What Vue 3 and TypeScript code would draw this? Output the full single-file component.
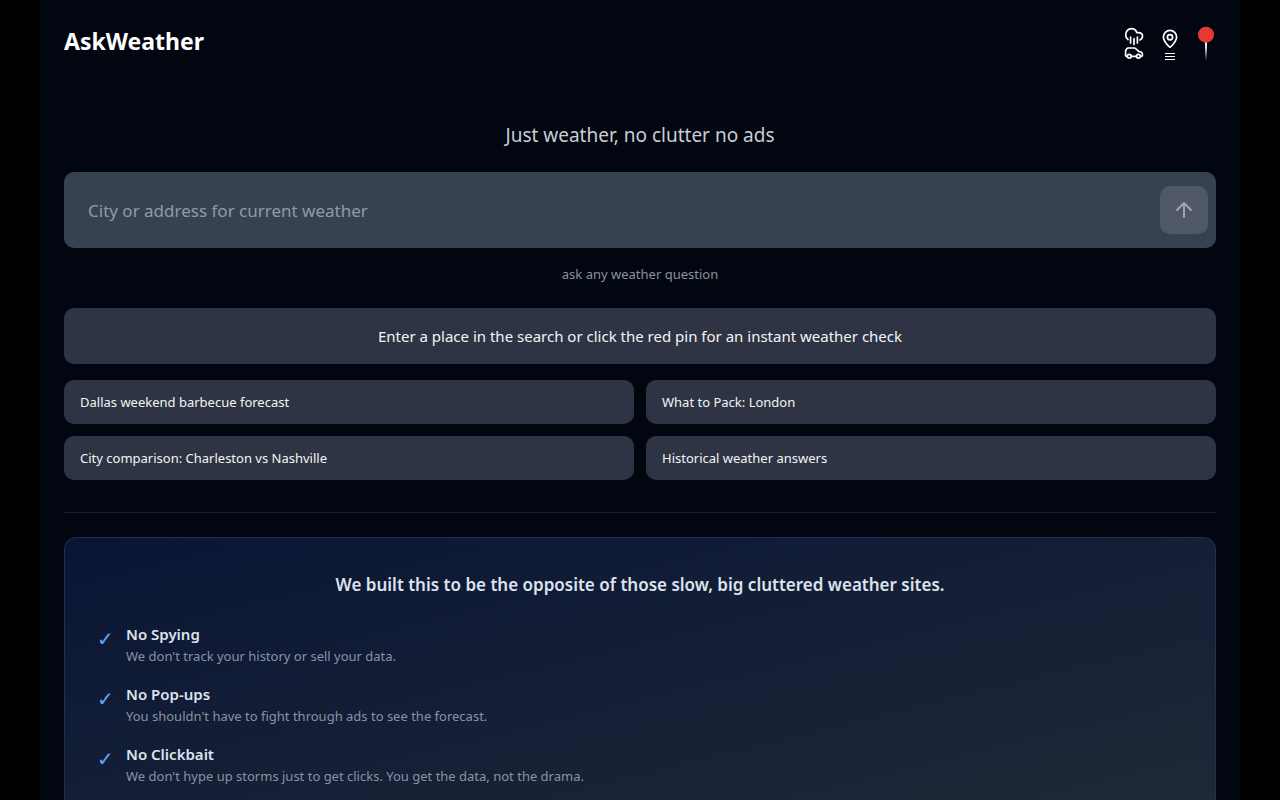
<script setup lang="ts">
import { ref } from 'vue'

const query = ref<string>('')

const suggestions: string[] = [
  'Dallas weekend barbecue forecast',
  'What to Pack: London',
  'City comparison: Charleston vs Nashville',
  'Historical weather answers',
]

interface Pledge {
  title: string
  detail: string
}

const pledges: Pledge[] = [
  { title: 'No Spying', detail: "We don't track your history or sell your data." },
  { title: 'No Pop-ups', detail: "You shouldn't have to fight through ads to see the forecast." },
  { title: 'No Clickbait', detail: "We don't hype up storms just to get clicks. You get the data, not the drama." },
]
</script>

<template>
  <div class="page">
    <header class="header">
      <h1 class="brand">AskWeather</h1>
      <nav class="actions" aria-label="Tools">
        <button type="button" class="icon-button" aria-label="Road trip weather">
          <svg width="20" height="36" viewBox="0 0 20 36" fill="none" stroke="currentColor" stroke-width="1.7" stroke-linecap="round" stroke-linejoin="round">
            <path d="M4 15.5C2.5 14.5 1.7 13 1.7 11.2C1.7 7.3 4.2 4.6 7.5 4.6C10 4.6 12 6 12.8 8.6H14.4C16.9 8.6 18.5 10.3 18.5 12.3C18.5 14.2 17.4 15.5 15.8 16" />
            <path d="M6.6 13.2V19M10 14.7V20.5M13.4 13.2V19" />
            <path d="M3.2 32.3H2.6Q1.6 32.3 1.6 31.2V27.6Q1.6 26.8 2 26L2.8 24.8Q3.2 24 4.2 24H10.2Q11 24 11.6 24.5L14.6 27.4L17 28Q18.4 28.5 18.4 29.8V31.2Q18.4 32.3 17.3 32.3H16.5M7.4 32.3H12.3" />
            <circle cx="5.3" cy="32.3" r="1.9" />
            <circle cx="14.4" cy="32.3" r="1.9" />
          </svg>
        </button>
        <button type="button" class="icon-button" aria-label="Saved places">
          <svg width="20" height="36" viewBox="0 0 20 36" fill="none" stroke="currentColor" stroke-width="1.7" stroke-linejoin="round">
            <path d="M16.6 13C16.6 17.2 12 21.6 10.5 23Q10 23.4 9.5 23C8 21.6 3.4 17.2 3.4 13A6.6 6.6 0 0 1 16.6 13Z" />
            <circle cx="10" cy="13.2" r="2.6" />
            <path d="M5 29.5H15M5 32.5H15M5 35.5H15" stroke-width="1" />
          </svg>
        </button>
        <button type="button" class="icon-button" aria-label="Weather at my location">
          <svg width="20" height="38" viewBox="0 0 20 38">
            <defs>
              <linearGradient id="needle" x1="0" y1="0" x2="0" y2="1">
                <stop offset="0" stop-color="#ffffff" />
                <stop offset="0.3" stop-color="#d5d7de" />
                <stop offset="1" stop-color="#d5d7de" stop-opacity="0" />
              </linearGradient>
            </defs>
            <rect x="9" y="18" width="2" height="19" fill="url(#needle)" />
            <circle cx="10" cy="10.7" r="8" fill="#e53935" />
          </svg>
        </button>
      </nav>
    </header>

    <main class="main">
      <p class="tagline">Just weather, no clutter no ads</p>

      <form class="search" @submit.prevent>
        <input v-model="query" class="search-input" type="text" aria-label="City or address" placeholder="City or address for current weather" />
        <button type="submit" class="send" aria-label="Search">
          <svg width="24" height="24" viewBox="0 0 24 24" fill="none" stroke="currentColor" stroke-width="2" stroke-linecap="round" stroke-linejoin="round">
            <path d="M12 19V5M5 12L12 5L19 12" />
          </svg>
        </button>
      </form>

      <p class="hint">ask any weather question</p>

      <p class="notice">Enter a place in the search or click the red pin for an instant weather check</p>

      <div class="suggestions">
        <button v-for="item in suggestions" :key="item" type="button" class="suggestion">{{ item }}</button>
      </div>

      <hr class="divider" />

      <section class="pledge">
        <h2 class="pledge-title">We built this to be the opposite of those slow, big cluttered weather sites.</h2>
        <ul class="pledge-list">
          <li v-for="item in pledges" :key="item.title" class="pledge-item">
            <span class="check" aria-hidden="true">✓</span>
            <div>
              <h3 class="item-title">{{ item.title }}</h3>
              <p class="item-detail">{{ item.detail }}</p>
            </div>
          </li>
        </ul>
      </section>
    </main>
  </div>
</template>

<style>
html {
  background: #000000;
  scrollbar-width: none;
}
body {
  margin: 0;
  background: #000000;
}
</style>

<style scoped>
.page {
  box-sizing: border-box;
  max-width: 1200px;
  min-height: 100vh;
  margin: 0 auto;
  padding: 24px;
  background: #020610;
  color: #ffffff;
  font-family: "Noto Sans", "Open Sans", sans-serif;
}
h1, h2, h3, p, ul {
  margin: 0;
  padding: 0;
}
button, input {
  font: inherit;
  border: 0;
  color: inherit;
}
button {
  cursor: pointer;
}
.header {
  display: flex;
  justify-content: space-between;
  align-items: flex-start;
  height: 36px;
}
.brand {
  font-size: 23px;
  line-height: 34px;
  font-weight: 700;
}
.actions {
  display: flex;
  gap: 16px;
  height: 36px;
}
.icon-button {
  width: 20px;
  padding: 0;
  background: none;
  display: flex;
  align-items: flex-start;
}
.icon-button svg {
  flex: none;
  overflow: visible;
}
.main {
  padding-top: 60px;
}
.tagline {
  font-size: 19px;
  line-height: 30px;
  text-align: center;
  color: #c9cdd4;
  margin-bottom: 22px;
}
.search {
  display: flex;
  align-items: center;
  height: 76px;
  padding-right: 8px;
  border-radius: 10px;
  background: #374250;
}
.search-input {
  flex: 1;
  min-width: 0;
  height: 100%;
  box-sizing: border-box;
  padding: 0 24px;
  background: none;
  outline: none;
  font-size: 17px;
}
.search-input::placeholder {
  color: #9299a6;
  opacity: 1;
}
.send {
  display: flex;
  align-items: center;
  justify-content: center;
  width: 48px;
  height: 48px;
  padding: 0;
  border-radius: 10px;
  background: #505868;
  color: #9fa5b0;
}
.hint {
  margin: 16px 0 24px;
  font-size: 13px;
  line-height: 20px;
  text-align: center;
  color: #8b919d;
}
.notice {
  padding: 16px;
  border-radius: 10px;
  background: #2e3443;
  font-size: 15px;
  line-height: 24px;
  text-align: center;
  color: #f3f4f6;
}
.suggestions {
  display: grid;
  grid-template-columns: 1fr 1fr;
  gap: 12px;
  margin-top: 16px;
}
.suggestion {
  padding: 12px 16px;
  border-radius: 10px;
  background: #2e3443;
  font-size: 13px;
  line-height: 20px;
  text-align: left;
  color: #f3f4f6;
}
.divider {
  height: 1px;
  margin: 32px 0 24px;
  border: 0;
  background: #1d222d;
}
.pledge {
  padding: 32px;
  border: 1px solid #203052;
  border-radius: 12px;
  background: linear-gradient(to bottom right, #0a1535, #1f2937);
}
.pledge-title {
  font-size: 17px;
  line-height: 30px;
  font-weight: 600;
  text-align: center;
  color: #dde2ec;
  margin-bottom: 22px;
}
.pledge-list {
  display: flex;
  flex-direction: column;
  gap: 16px;
  list-style: none;
}
.pledge-item {
  display: flex;
  gap: 12px;
}
.check {
  font-size: 20px;
  line-height: 34px;
  color: #60a5fa;
}
.item-title {
  font-size: 15px;
  line-height: 24px;
  font-weight: 600;
  color: #dde2ec;
}
.item-detail {
  font-size: 13px;
  line-height: 20px;
  color: #8a93a3;
}
</style>
